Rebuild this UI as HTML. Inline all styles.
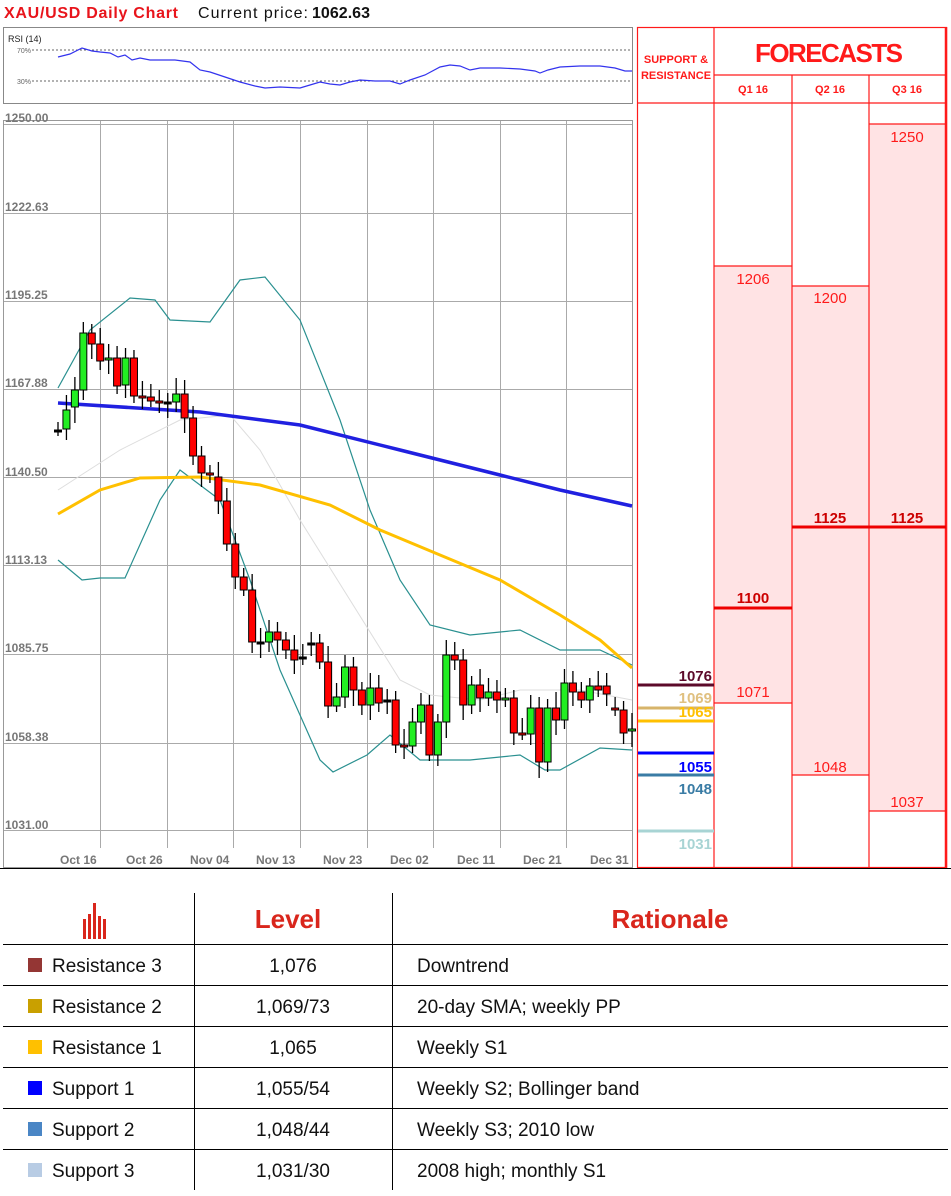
<!DOCTYPE html>
<html><head><meta charset="utf-8"><style>
body{margin:0;width:951px;height:1196px;background:#fff;overflow:hidden;font-family:"Liberation Sans",sans-serif}
svg{position:absolute;left:0;top:0}
</style></head><body>
<svg id="s" width="951" height="1196" xmlns="http://www.w3.org/2000/svg" font-family="Liberation Sans, sans-serif">
<text x="4" y="18" font-size="16" font-weight="bold" fill="#e8141b" textLength="174">XAU/USD Daily Chart</text>
<text x="198" y="18" font-size="16" fill="#111" textLength="110">Current price:</text>
<text x="312" y="18" font-size="16" font-weight="bold" fill="#111" textLength="58">1062.63</text>
<!-- RSI -->
<rect x="3.5" y="27.5" width="629" height="76" fill="#fff" stroke="#888"/>
<text x="8" y="42" font-size="9" fill="#222">RSI (14)</text>
<text x="17" y="53" font-size="7" fill="#666">70%</text>
<text x="17" y="84" font-size="7" fill="#666">30%</text>
<line x1="32" y1="50" x2="632" y2="50" stroke="#666" stroke-dasharray="2,2"/>
<line x1="32" y1="81" x2="632" y2="81" stroke="#666" stroke-dasharray="2,2"/>
<polyline fill="none" stroke="#3333ee" stroke-width="1.2" points="58,57 70,54 82,48 92,51 100,52 110,53 118,57 125,55 132,60 140,58 150,60 165,60 175,60 190,62 200,70 210,72 225,77 240,82 255,86 265,88 280,87 300,88 310,85 320,82 330,84 340,85 350,82 360,80 375,81 390,81 400,84 410,80 425,75 440,67 450,65 460,66 470,70 480,68 500,68 520,69 535,71 540,73 548,70 560,67 580,66 600,66 615,68 625,71 632,71"/>
<!-- main chart -->
<rect x="3.5" y="120.5" width="629" height="747" fill="#fff" stroke="#999"/>
<g id="grid" stroke="#aaa" stroke-width="1"></g>
<g font-size="12" fill="#777" font-weight="bold">
<text x="5" y="122">1250.00</text><text x="5" y="211">1222.63</text><text x="5" y="299">1195.25</text><text x="5" y="387">1167.88</text><text x="5" y="476">1140.50</text><text x="5" y="564">1113.13</text><text x="5" y="652">1085.75</text><text x="5" y="741">1058.38</text><text x="5" y="829">1031.00</text>
<text x="60" y="864">Oct 16</text><text x="126" y="864">Oct 26</text><text x="190" y="864">Nov 04</text><text x="256" y="864">Nov 13</text><text x="323" y="864">Nov 23</text><text x="390" y="864">Dec 02</text><text x="457" y="864">Dec 11</text><text x="523" y="864">Dec 21</text><text x="590" y="864">Dec 31</text>
</g>
<polyline fill="none" stroke="#ddd" stroke-width="1" points="58,490 120,450 180,420 230,415 260,450 300,520 350,600 400,680 430,695 480,700 520,690 580,690 632,700"/>
<polyline fill="none" stroke="#2a9090" stroke-width="1.2" points="58,388 90,330 130,298 155,300 170,320 210,322 240,280 265,277 300,320 340,420 370,510 400,580 430,625 470,635 520,630 560,650 600,650 632,665"/>
<polyline fill="none" stroke="#2a9090" stroke-width="1.2" points="58,560 82,580 100,578 125,578 160,500 180,470 220,500 250,580 280,670 320,760 333,772 367,755 390,735 420,760 470,760 520,755 545,770 560,770 600,748 632,750"/>
<polyline fill="none" stroke="#ffc000" stroke-width="3" points="58,514 100,490 140,478 200,477 260,485 330,505 380,530 440,555 500,580 560,615 600,640 632,668"/>
<polyline fill="none" stroke="#2020e0" stroke-width="3.5" points="58,403 200,412 300,425 400,450 500,475 560,490 632,506"/>
<g id="candles"></g>
<!-- forecast panel -->
<rect x="714" y="266" width="78" height="437" fill="#ffe3e4"/>
<rect x="792" y="286" width="77" height="489" fill="#ffe3e4"/>
<rect x="869" y="124" width="77" height="687" fill="#ffe3e4"/>
<g stroke="#ff1a1a" stroke-width="1.2" fill="none">
<rect x="637.5" y="27.5" width="309" height="840"/>
<line x1="714" y1="27" x2="714" y2="868"/><line x1="792" y1="75" x2="792" y2="868"/><line x1="869" y1="75" x2="869" y2="868"/>
<line x1="714" y1="75" x2="946" y2="75"/><line x1="637" y1="103" x2="946" y2="103"/>
<line x1="714" y1="266" x2="792" y2="266"/><line x1="714" y1="703" x2="792" y2="703"/>
<line x1="792" y1="286" x2="869" y2="286"/><line x1="792" y1="775" x2="869" y2="775"/>
<line x1="869" y1="124" x2="946" y2="124"/><line x1="869" y1="811" x2="946" y2="811"/>
</g>
<line x1="946" y1="27" x2="946" y2="868" stroke="#ff1a1a" stroke-width="2.5"/>
<line x1="714" y1="608" x2="792" y2="608" stroke="#e00" stroke-width="3"/>
<line x1="792" y1="527" x2="946" y2="527" stroke="#e00" stroke-width="3"/>
<g fill="#ff1a1a" font-weight="bold">
<text x="676" y="63" font-size="11" text-anchor="middle">SUPPORT &amp;</text>
<text x="676" y="79" font-size="11" text-anchor="middle">RESISTANCE</text>
<text x="829" y="62" font-size="26" text-anchor="middle" textLength="148">FORECASTS</text>
<text x="753" y="93" font-size="11" text-anchor="middle">Q1 16</text>
<text x="830" y="93" font-size="11" text-anchor="middle">Q2 16</text>
<text x="907" y="93" font-size="11" text-anchor="middle">Q3 16</text>
</g>
<g fill="#ff1a1a" font-size="15" text-anchor="middle">
<text x="753" y="284">1206</text><text x="753" y="697">1071</text>
<text x="830" y="303">1200</text><text x="830" y="772">1048</text>
<text x="907" y="142">1250</text><text x="907" y="807">1037</text>
</g>
<g fill="#cc0000" font-size="15" font-weight="bold" text-anchor="middle">
<text x="753" y="603">1100</text><text x="830" y="523">1125</text><text x="907" y="523">1125</text>
</g>
<g stroke-width="3">
<line x1="638" y1="685" x2="714" y2="685" stroke="#5c0a2a"/>
<line x1="638" y1="708" x2="714" y2="708" stroke="#d7b46a"/>
<line x1="638" y1="721" x2="714" y2="721" stroke="#ffc000"/>
<line x1="638" y1="753" x2="714" y2="753" stroke="#0000ff"/>
<line x1="638" y1="775" x2="714" y2="775" stroke="#3a7ca5"/>
<line x1="638" y1="831" x2="714" y2="831" stroke="#a8d4d4"/>
</g>
<g font-size="15" font-weight="bold" text-anchor="end">
<text x="712" y="681" fill="#5c0a2a">1076</text>
<text x="712" y="703" fill="#e0c080">1069</text>
<text x="712" y="717" fill="#ffc000">1065</text>
<text x="712" y="772" fill="#0000ff">1055</text>
<text x="712" y="794" fill="#3a7ca5">1048</text>
<text x="712" y="849" fill="#a8d4d4">1031</text>
</g>
<line x1="0" y1="868.5" x2="951" y2="868.5" stroke="#000"/>
<!-- table -->
<g stroke="#000" stroke-width="1">
<line x1="194.5" y1="893" x2="194.5" y2="1190"/><line x1="392.5" y1="893" x2="392.5" y2="1190"/>
<line x1="3" y1="944.5" x2="948" y2="944.5"/><line x1="3" y1="985.5" x2="948" y2="985.5"/><line x1="3" y1="1026.5" x2="948" y2="1026.5"/><line x1="3" y1="1067.5" x2="948" y2="1067.5"/><line x1="3" y1="1108.5" x2="948" y2="1108.5"/><line x1="3" y1="1149.5" x2="948" y2="1149.5"/>
</g>
<g fill="#d9261c">
<rect x="83" y="919" width="3" height="20"/><rect x="88" y="914" width="3" height="25"/><rect x="93" y="903" width="3" height="36"/><rect x="98" y="916" width="3" height="23"/><rect x="103" y="919" width="3" height="20"/>
</g>
<g fill="#d9261c" font-weight="bold" font-size="26" text-anchor="middle">
<text x="288" y="928">Level</text><text x="670" y="928">Rationale</text>
</g>
<g font-size="19" fill="#111">
<rect x="28" y="958" width="14" height="14" fill="#943634"/><text x="52" y="972">Resistance 3</text><text x="293" y="972" text-anchor="middle">1,076</text><text x="417" y="972">Downtrend</text>
<rect x="28" y="999" width="14" height="14" fill="#c9a000"/><text x="52" y="1013">Resistance 2</text><text x="293" y="1013" text-anchor="middle">1,069/73</text><text x="417" y="1013">20-day SMA; weekly PP</text>
<rect x="28" y="1040" width="14" height="14" fill="#ffc000"/><text x="52" y="1054">Resistance 1</text><text x="293" y="1054" text-anchor="middle">1,065</text><text x="417" y="1054">Weekly S1</text>
<rect x="28" y="1081" width="14" height="14" fill="#0000ff"/><text x="52" y="1095">Support 1</text><text x="293" y="1095" text-anchor="middle">1,055/54</text><text x="417" y="1095">Weekly S2; Bollinger band</text>
<rect x="28" y="1122" width="14" height="14" fill="#4a86c5"/><text x="52" y="1136">Support 2</text><text x="293" y="1136" text-anchor="middle">1,048/44</text><text x="417" y="1136">Weekly S3; 2010 low</text>
<rect x="28" y="1163" width="14" height="14" fill="#b8cce4"/><text x="52" y="1177">Support 3</text><text x="293" y="1177" text-anchor="middle">1,031/30</text><text x="417" y="1177">2008 high; monthly S1</text>
</g>
</svg>
<script>
var NS="http://www.w3.org/2000/svg";
function el(p,t,a){var e=document.createElementNS(NS,t);for(var k in a)e.setAttribute(k,a[k]);p.appendChild(e);return e;}
var g=document.getElementById('grid');
[124,213,301,389,477,565,654,743,830].forEach(function(y){el(g,'line',{x1:4,x2:632,y1:y+.5,y2:y+.5});});
[100,167,233,300,367,433,500,566].forEach(function(x){el(g,'line',{x1:x+.5,x2:x+.5,y1:121,y2:848});});
var d=[[430,430],[429,410],[407,390],[390,333],[333,344],[344,361],[360,358],[358,386],[385,358],[358,396],[396,397],[397,401],[401,402],[402,402],[402,394],[394,418],[418,456],[456,473],[473,475],[477,501],[501,544],[544,577],[577,590],[590,642],[642,642],[642,632],[632,640],[640,650],[650,660],[657,657],[643,643],[643,662],[662,706],[706,697],[697,667],[667,690],[690,705],[705,688],[688,703],[700,700],[700,745],[745,746],[746,722],[722,705],[705,755],[755,722],[722,655],[655,660],[660,705],[705,685],[685,698],[698,692],[692,700],[700,698],[698,733],[733,734],[734,708],[708,762],[762,708],[708,720],[720,683],[683,692],[692,700],[700,686],[686,690],[686,694],[708,710],[710,733],[731,729]];
var c=document.getElementById('candles');var n=d.length;
d.forEach(function(o,i){var x=58+i*(574/(n-1));var hi=Math.min(o[0],o[1])-8-(i*7%9),lo=Math.max(o[0],o[1])+6+(i*5%11);
el(c,'line',{x1:x,x2:x,y1:hi,y2:lo,stroke:'#000','stroke-width':1.3});
var up=o[1]<o[0];var t=Math.min(o[0],o[1]),h=Math.max(2,Math.abs(o[0]-o[1]));
el(c,'rect',{x:x-3.5,y:t,width:7,height:h,fill:up?'#22ee22':(o[1]>o[0]?'#ff0000':'#000'),stroke:'#000','stroke-width':1});});
</script>
</body></html>
